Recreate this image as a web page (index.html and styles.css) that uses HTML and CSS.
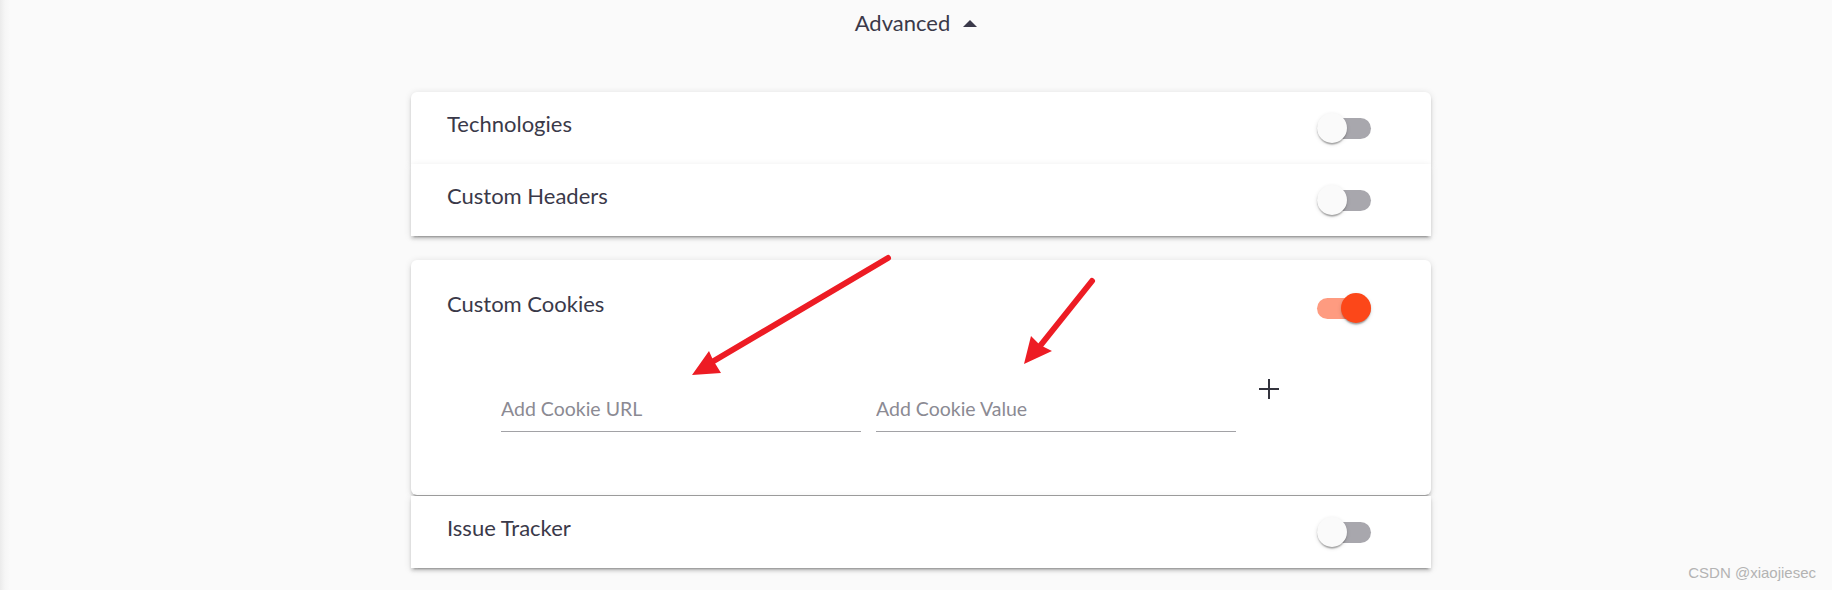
FILE: index.html
```html
<!DOCTYPE html>
<html lang="en">
<head>
<meta charset="utf-8">
<title>Advanced</title>
<link rel="stylesheet" href="styles.css">
</head>
<body>
<div class="page">
  <div class="advanced">
    <span class="advanced-label">Advanced</span>
    <span class="caret"></span>
  </div>

  <div class="accordion">
    <div class="panel panel-first">
      <div class="panel-header">
        <span class="panel-title">Technologies</span>
        <span class="toggle"><span class="thumb"></span></span>
      </div>
    </div>
    <div class="panel">
      <div class="panel-header">
        <span class="panel-title">Custom Headers</span>
        <span class="toggle"><span class="thumb"></span></span>
      </div>
    </div>
    <div class="panel panel-expanded">
      <div class="panel-header panel-header-tall">
        <span class="panel-title">Custom Cookies</span>
        <span class="toggle toggle-on"><span class="thumb"></span></span>
      </div>
      <div class="panel-body">
        <input class="field" type="text" placeholder="Add Cookie URL">
        <input class="field" type="text" placeholder="Add Cookie Value">
        <span class="add-btn">
          <svg width="20" height="20" viewBox="0 0 20 20"><path d="M10 0V20M0 10H20" stroke="#33333d" stroke-width="2" fill="none"/></svg>
        </span>
      </div>
    </div>
    <div class="panel panel-last">
      <div class="panel-header">
        <span class="panel-title">Issue Tracker</span>
        <span class="toggle"><span class="thumb"></span></span>
      </div>
    </div>
  </div>
</div>

<svg class="annotations" width="1832" height="590" viewBox="0 0 1832 590">
  <line x1="888" y1="258" x2="712" y2="362" stroke="#ed1c24" stroke-width="6" stroke-linecap="round"/>
  <polygon points="692,375 709,351 713,360 721,373" fill="#ed1c24"/>
  <line x1="1092" y1="281" x2="1040" y2="346" stroke="#ed1c24" stroke-width="6" stroke-linecap="round"/>
  <polygon points="1024,364 1031,336 1040,345 1052,351" fill="#ed1c24"/>
</svg>

<div class="watermark">CSDN @xiaojiesec</div>
</body>
</html>
```

FILE: styles.css
```css
html, body {
  margin: 0;
  padding: 0;
}

body {
  width: 1832px;
  height: 590px;
  overflow: hidden;
  position: relative;
  background: linear-gradient(to right, #ebebeb 0px, #f6f6f6 5px, #fafafa 10px);
  font-family: "Lato", "Noto Sans", sans-serif;
  color: #3a3949;
}

.page {
  display: flex;
  flex-direction: column;
}

.advanced {
  box-sizing: border-box;
  height: 92px;
  padding-top: 10px;
  display: flex;
  justify-content: center;
  align-items: flex-start;
  gap: 13px;
}

.advanced-label {
  font-size: 22px;
  line-height: 26px;
  color: #3a3949;
}

.caret {
  width: 0;
  height: 0;
  margin-top: 10px;
  border-left: 7px solid transparent;
  border-right: 7px solid transparent;
  border-bottom: 7px solid #3a3949;
}

.accordion {
  width: 1020px;
  margin: 0 auto;
  padding-left: 10px;
  display: flex;
  flex-direction: column;
}

.panel {
  background: #ffffff;
  box-shadow: 0 4.5px 1.5px -3px rgba(0,0,0,.2), 0 3px 3px 0 rgba(0,0,0,.14), 0 1.5px 7.5px 0 rgba(0,0,0,.12);
}

.panel-first {
  border-radius: 6px 6px 0 0;
}

.panel-expanded {
  margin: 24px 0 1px;
  border-radius: 6px;
}

.panel-header {
  box-sizing: border-box;
  height: 72px;
  padding: 0 60px 0 36px;
  display: flex;
  align-items: center;
  justify-content: space-between;
}

.panel-header-tall {
  height: 96px;
}

.panel-title {
  font-size: 22px;
  line-height: 26px;
  margin-bottom: 9px;
  color: #3a3949;
}

.toggle {
  position: relative;
  width: 54px;
  height: 21px;
  border-radius: 10.5px;
  background: #a8a7ad;
  flex: none;
}

.toggle .thumb {
  position: absolute;
  left: 0;
  top: -4.5px;
  width: 30px;
  height: 30px;
  border-radius: 50%;
  background: #fafafa;
  box-shadow: 0 3px 1.5px -1.5px rgba(0,0,0,.2), 0 1.5px 1.5px 0 rgba(0,0,0,.14), 0 1.5px 4.5px 0 rgba(0,0,0,.12);
}

.toggle-on {
  background: #fe9b80;
}

.toggle-on .thumb {
  left: 24px;
  background: #fc4719;
}

.panel-body {
  box-sizing: border-box;
  height: 139px;
  padding: 38px 36px 0 90px;
  display: flex;
  align-items: flex-start;
  gap: 15px;
}

.field {
  box-sizing: border-box;
  width: 360px;
  height: 37.5px;
  margin: 0;
  padding: 0 0 8px 0;
  border: none;
  border-bottom: 1.5px solid #a2a2a6;
  outline: none;
  background: transparent;
  font-family: "Lato", "Noto Sans", sans-serif;
  font-size: 19.5px;
  line-height: 28px;
  color: #3a3949;
}

.field::placeholder {
  color: #8b8a93;
  opacity: 1;
}

.add-btn {
  display: flex;
  width: 20px;
  height: 20px;
  margin: -15px 0 0 8px;
}

.annotations {
  position: absolute;
  left: 0;
  top: 0;
  pointer-events: none;
}

.watermark {
  position: absolute;
  right: 16px;
  bottom: 8px;
  font-family: "Liberation Sans", Arial, sans-serif;
  font-size: 15px;
  line-height: 18px;
  color: #b3b3b3;
}
```
